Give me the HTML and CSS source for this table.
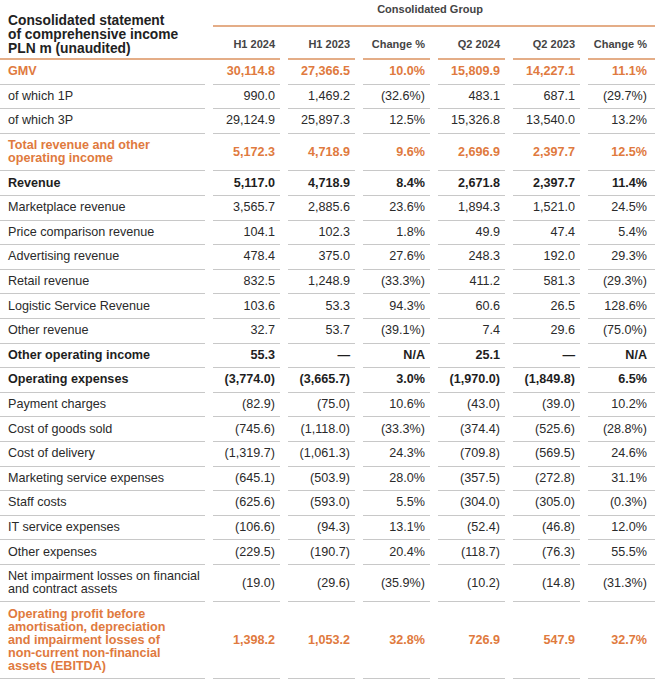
FILE: index.html
```html
<!DOCTYPE html>
<html lang="en">
<head>
<meta charset="utf-8">
<title>Consolidated statement of comprehensive income</title>
<link rel="stylesheet" href="styles.css">
</head>
<body>
<div class="sheet">
  <div class="head">
    <div class="title">Consolidated statement<br>of comprehensive income<br>PLN m (unaudited)</div>
    <div class="group">Consolidated Group</div>
    <div class="col">H1 2024</div>
    <div class="col">H1 2023</div>
    <div class="col">Change %</div>
    <div class="col">Q2 2024</div>
    <div class="col">Q2 2023</div>
    <div class="col last">Change %</div>
  </div>

  <div class="row hl"><div class="lab">GMV</div><div class="n">30,114.8</div><div class="n">27,366.5</div><div class="n">10.0%</div><div class="n">15,809.9</div><div class="n">14,227.1</div><div class="n">11.1%</div></div>
  <div class="row"><div class="lab">of which 1P</div><div class="n">990.0</div><div class="n">1,469.2</div><div class="n">(32.6%)</div><div class="n">483.1</div><div class="n">687.1</div><div class="n">(29.7%)</div></div>
  <div class="row"><div class="lab">of which 3P</div><div class="n">29,124.9</div><div class="n">25,897.3</div><div class="n">12.5%</div><div class="n">15,326.8</div><div class="n">13,540.0</div><div class="n">13.2%</div></div>
  <div class="row hl"><div class="lab">Total revenue and other<br>operating income</div><div class="n">5,172.3</div><div class="n">4,718.9</div><div class="n">9.6%</div><div class="n">2,696.9</div><div class="n">2,397.7</div><div class="n">12.5%</div></div>
  <div class="row bold"><div class="lab">Revenue</div><div class="n">5,117.0</div><div class="n">4,718.9</div><div class="n">8.4%</div><div class="n">2,671.8</div><div class="n">2,397.7</div><div class="n">11.4%</div></div>
  <div class="row"><div class="lab">Marketplace revenue</div><div class="n">3,565.7</div><div class="n">2,885.6</div><div class="n">23.6%</div><div class="n">1,894.3</div><div class="n">1,521.0</div><div class="n">24.5%</div></div>
  <div class="row"><div class="lab">Price comparison revenue</div><div class="n">104.1</div><div class="n">102.3</div><div class="n">1.8%</div><div class="n">49.9</div><div class="n">47.4</div><div class="n">5.4%</div></div>
  <div class="row"><div class="lab">Advertising revenue</div><div class="n">478.4</div><div class="n">375.0</div><div class="n">27.6%</div><div class="n">248.3</div><div class="n">192.0</div><div class="n">29.3%</div></div>
  <div class="row"><div class="lab">Retail revenue</div><div class="n">832.5</div><div class="n">1,248.9</div><div class="n">(33.3%)</div><div class="n">411.2</div><div class="n">581.3</div><div class="n">(29.3%)</div></div>
  <div class="row"><div class="lab">Logistic Service Revenue</div><div class="n">103.6</div><div class="n">53.3</div><div class="n">94.3%</div><div class="n">60.6</div><div class="n">26.5</div><div class="n">128.6%</div></div>
  <div class="row"><div class="lab">Other revenue</div><div class="n">32.7</div><div class="n">53.7</div><div class="n">(39.1%)</div><div class="n">7.4</div><div class="n">29.6</div><div class="n">(75.0%)</div></div>
  <div class="row bold"><div class="lab">Other operating income</div><div class="n">55.3</div><div class="n">—</div><div class="n">N/A</div><div class="n">25.1</div><div class="n">—</div><div class="n">N/A</div></div>
  <div class="row bold"><div class="lab">Operating expenses</div><div class="n">(3,774.0)</div><div class="n">(3,665.7)</div><div class="n">3.0%</div><div class="n">(1,970.0)</div><div class="n">(1,849.8)</div><div class="n">6.5%</div></div>
  <div class="row"><div class="lab">Payment charges</div><div class="n">(82.9)</div><div class="n">(75.0)</div><div class="n">10.6%</div><div class="n">(43.0)</div><div class="n">(39.0)</div><div class="n">10.2%</div></div>
  <div class="row"><div class="lab">Cost of goods sold</div><div class="n">(745.6)</div><div class="n">(1,118.0)</div><div class="n">(33.3%)</div><div class="n">(374.4)</div><div class="n">(525.6)</div><div class="n">(28.8%)</div></div>
  <div class="row"><div class="lab">Cost of delivery</div><div class="n">(1,319.7)</div><div class="n">(1,061.3)</div><div class="n">24.3%</div><div class="n">(709.8)</div><div class="n">(569.5)</div><div class="n">24.6%</div></div>
  <div class="row"><div class="lab">Marketing service expenses</div><div class="n">(645.1)</div><div class="n">(503.9)</div><div class="n">28.0%</div><div class="n">(357.5)</div><div class="n">(272.8)</div><div class="n">31.1%</div></div>
  <div class="row"><div class="lab">Staff costs</div><div class="n">(625.6)</div><div class="n">(593.0)</div><div class="n">5.5%</div><div class="n">(304.0)</div><div class="n">(305.0)</div><div class="n">(0.3%)</div></div>
  <div class="row"><div class="lab">IT service expenses</div><div class="n">(106.6)</div><div class="n">(94.3)</div><div class="n">13.1%</div><div class="n">(52.4)</div><div class="n">(46.8)</div><div class="n">12.0%</div></div>
  <div class="row"><div class="lab">Other expenses</div><div class="n">(229.5)</div><div class="n">(190.7)</div><div class="n">20.4%</div><div class="n">(118.7)</div><div class="n">(76.3)</div><div class="n">55.5%</div></div>
  <div class="row"><div class="lab">Net impairment losses on financial<br>and contract assets</div><div class="n">(19.0)</div><div class="n">(29.6)</div><div class="n">(35.9%)</div><div class="n">(10.2)</div><div class="n">(14.8)</div><div class="n">(31.3%)</div></div>
  <div class="row hl"><div class="lab">Operating profit before<br>amortisation, depreciation<br>and impairment losses of<br>non-current non-financial<br>assets (EBITDA)</div><div class="n">1,398.2</div><div class="n">1,053.2</div><div class="n">32.8%</div><div class="n">726.9</div><div class="n">547.9</div><div class="n">32.7%</div></div>
</div>
</body>
</html>
```

FILE: styles.css
```css
html, body {
  margin: 0;
  padding: 0;
  background: #ffffff;
}

body {
  font-family: "Liberation Sans", Arial, sans-serif;
  color: #2a2a2a;
}

.sheet {
  width: 655px;
}

.head,
.row {
  display: grid;
  grid-template-columns: 205px repeat(6, 67px);
  column-gap: 8px;
}

.head {
  grid-template-rows: 27px 33px;
}

.title {
  grid-column: 1;
  grid-row: 1 / 3;
  align-self: end;
  margin-right: -8px;
  padding: 0 0 2px 8px;
  font-size: 13.8px;
  line-height: 14px;
  font-weight: 700;
  color: #222;
  border-bottom: 2px solid #e4ad87;
}

.group {
  grid-column: 2 / 8;
  grid-row: 1;
  text-align: center;
  font-size: 11px;
  font-weight: 700;
  color: #444;
  padding-top: 3px;
  padding-right: 8px;
  border-bottom: 2px solid #e4ad87;
}

.col {
  grid-row: 2;
  display: flex;
  align-items: center;
  justify-content: flex-end;
  padding-right: 5px;
  padding-top: 2px;
  font-size: 11px;
  font-weight: 700;
  color: #444;
  border-bottom: 2px solid #e4ad87;
}

.col.last {
  padding-right: 8px;
}

.row > div {
  border-bottom: 1px solid #c8c8c8;
  padding: 5.3px 0;
  font-size: 12.6px;
  line-height: 13px;
  display: flex;
  align-items: center;
  white-space: nowrap;
}

.row .lab {
  padding-left: 8px;
}

.row .n {
  justify-content: flex-end;
  padding-right: 5px;
}

.row .n:last-child {
  padding-right: 8px;
}

.row.bold > div {
  font-weight: 700;
  color: #1e1e1e;
}

.row.hl > div {
  font-weight: 700;
  color: #e07a3e;
}
```
